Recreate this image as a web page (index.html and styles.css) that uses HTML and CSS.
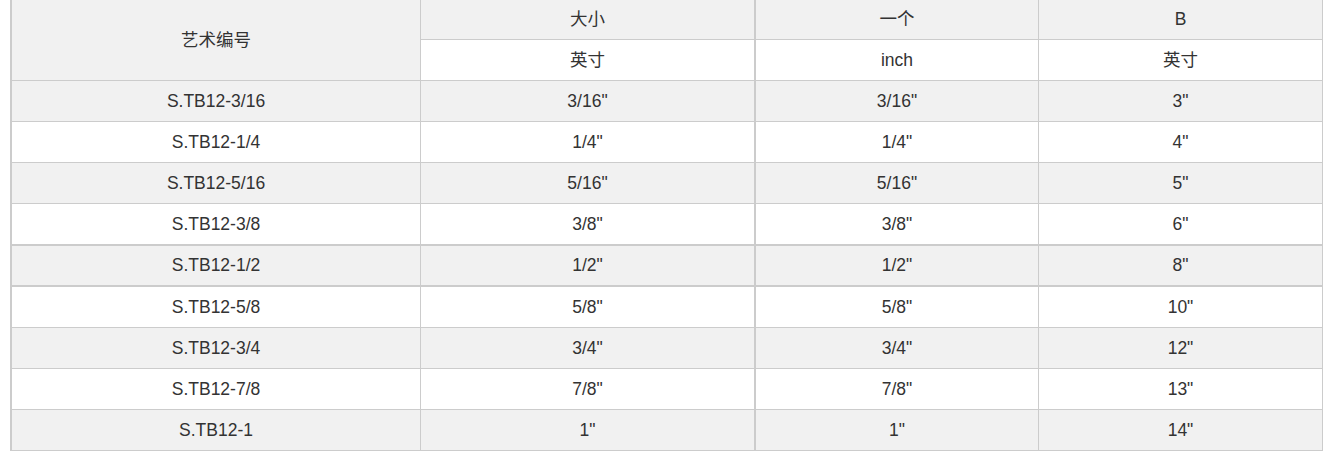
FILE: index.html
```html
<!DOCTYPE html>
<html lang="zh">
<head>
<meta charset="utf-8">
<title>规格表</title>
<link rel="stylesheet" href="styles.css">
</head>
<body>
<table class="spec">
  <colgroup>
    <col class="c1">
    <col class="c2">
    <col class="c3">
    <col class="c4">
  </colgroup>
  <tr class="h1 grey">
    <td class="first tall" rowspan="2">艺术编号</td>
    <td class="wide">大小</td>
    <td>一个</td>
    <td>B</td>
  </tr>
  <tr class="h2">
    <td class="wide">英寸</td>
    <td>inch</td>
    <td>英寸</td>
  </tr>
  <tr class="grey"><td class="first">S.TB12-3/16</td><td class="wide">3/16"</td><td>3/16"</td><td>3"</td></tr>
  <tr><td class="first">S.TB12-1/4</td><td class="wide">1/4"</td><td>1/4"</td><td>4"</td></tr>
  <tr class="grey"><td class="first">S.TB12-5/16</td><td class="wide">5/16"</td><td>5/16"</td><td>5"</td></tr>
  <tr class="thick"><td class="first">S.TB12-3/8</td><td class="wide">3/8"</td><td>3/8"</td><td>6"</td></tr>
  <tr class="grey thick short"><td class="first">S.TB12-1/2</td><td class="wide">1/2"</td><td>1/2"</td><td>8"</td></tr>
  <tr><td class="first">S.TB12-5/8</td><td class="wide">5/8"</td><td>5/8"</td><td>10"</td></tr>
  <tr class="grey"><td class="first">S.TB12-3/4</td><td class="wide">3/4"</td><td>3/4"</td><td>12"</td></tr>
  <tr><td class="first">S.TB12-7/8</td><td class="wide">7/8"</td><td>7/8"</td><td>13"</td></tr>
  <tr class="grey"><td class="first">S.TB12-1</td><td class="wide">1"</td><td>1"</td><td>14"</td></tr>
</table>
</body>
</html>
```
FILE: styles.css
```css
html, body {
  margin: 0;
  padding: 0;
  background: #ffffff;
}

.spec {
  margin-left: 10px;
  border-collapse: separate;
  border-spacing: 0;
  table-layout: fixed;
  width: 1313px;
  font-family: "Liberation Sans", Arial, "Noto Sans CJK SC", sans-serif;
  font-size: 17.5px;
  color: #333333;
}

.c1 { width: 411px; }
.c2 { width: 335px; }
.c3 { width: 283px; }
.c4 { width: 284px; }

.spec td {
  box-sizing: border-box;
  padding: 0;
  text-align: center;
  vertical-align: middle;
  line-height: 40px;
  height: 41px;
  border-right: 1px solid #cccccc;
  border-bottom: 1px solid #cccccc;
  background: #ffffff;
}

.spec tr.grey td,
.spec td.tall {
  background: #f1f1f1;
}

.spec td.first {
  border-left: 2px solid #cccccc;
}

.spec td.wide {
  border-right: 2px solid #cccccc;
}

.spec tr.h1 td {
  height: 40px;
  line-height: 39px;
}

.spec td.tall {
  height: 81px;
  line-height: 20px;
}

.spec tr.thick td {
  border-bottom-width: 2px;
  height: 42px;
}

.spec tr.short td {
  height: 41px;
  line-height: 39px;
}
```
